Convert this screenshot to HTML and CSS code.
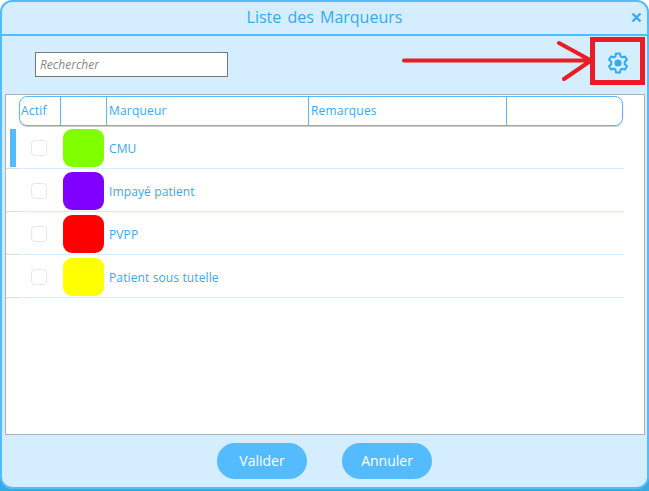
FILE: index.html
```html
<!DOCTYPE html>
<html>
<head>
    <meta name="viewport" content="width=device-width, initial-scale=1">
    <title>Liste des Marqueurs</title>
    <link rel="stylesheet" href="styles.css">
</head>

<body>
    <div class="dialog">
        <div class="title-bar">
            <span class="title">Liste des Marqueurs</span>
            <svg class="close" viewBox="0 0 11 11" width="11" height="11">
                <path d="M1.500 1.500L9.500 9.500M9.500 1.500L1.500 9.500" fill="none" stroke="#36a9f5" stroke-width="2.400"/>
            </svg>
        </div>

        <div class="tool-bar">
            <input type="text" class="search" placeholder="Rechercher">
            <svg class="gear" viewBox="0 0 24 24" width="24" height="24">
                <path d="M10 2.500h4l.6 2.900 1.600.9 2.800-.9 2 3.400-2.200 2v2.400l2.200 2-2 3.400-2.800-.9-1.600.9-.6 2.900h-4l-.6-2.900-1.600-.9-2.800.9-2-3.400 2.200-2v-2.400l-2.200-2 2-3.400 2.800.9 1.600-.9z" fill="none" stroke="#36a9f5" stroke-width="2" stroke-linejoin="round"/>
                <circle cx="12" cy="12" r="3.500" fill="#36a9f5"/>
            </svg>
        </div>

        <div class="panel">
            <div class="grid-head">
                <div class="head-cell">Actif</div>
                <div class="head-cell"></div>
                <div class="head-cell">Marqueur</div>
                <div class="head-cell">Remarques</div>
                <div class="head-cell"></div>
            </div>

            <div class="row selected">
                <div class="row-mark"></div>
                <div class="check-cell"><span class="check"></span></div>
                <div class="swatch green"></div>
                <div class="name">CMU</div>
            </div>
            <div class="row">
                <div class="row-mark"></div>
                <div class="check-cell"><span class="check"></span></div>
                <div class="swatch purple"></div>
                <div class="name">Impayé patient</div>
            </div>
            <div class="row">
                <div class="row-mark"></div>
                <div class="check-cell"><span class="check"></span></div>
                <div class="swatch red"></div>
                <div class="name">PVPP</div>
            </div>
            <div class="row">
                <div class="row-mark"></div>
                <div class="check-cell"><span class="check"></span></div>
                <div class="swatch yellow"></div>
                <div class="name">Patient sous tutelle</div>
            </div>
        </div>

        <div class="buttons">
            <div class="btn">Valider</div>
            <div class="btn">Annuler</div>
        </div>
    </div>

    <!-- red annotation drawn over the screenshot -->
    <svg class="annotation" viewBox="0 0 649 491" width="649" height="491">
        <path d="M404 60.500H590M559 43L591 60.500M564 79L591 60.500" fill="none" stroke="#ed1c24" stroke-width="4" stroke-linecap="round"/>
        <rect x="592.500" y="39.500" width="50" height="43" fill="none" stroke="#ed1c24" stroke-width="5"/>
    </svg>
</body>

</html>
```

FILE: styles.css
```css
* {
    box-sizing: border-box;
}

html,
body {
    margin: 0;
    height: 491px;
    overflow: hidden;
}

body {
    position: relative;
    background: linear-gradient(#ffffff 50%, #36a9e1 50%);
    font-family: "Open Sans", "Noto Sans", sans-serif;
    color: #36a9f5;
}

.dialog {
    display: flex;
    flex-direction: column;
    width: 649px;
    height: 489px;
    background-color: #d4eeff;
    border: 2px solid #55bbff;
    border-radius: 12px;
}

.title-bar {
    display: flex;
    justify-content: center;
    align-items: center;
    position: relative;
    height: 34px;
    flex-shrink: 0;
    padding-bottom: 2px;
    border-bottom: 2px solid #55bbff;
}

.title {
    font-size: 16px;
    word-spacing: 2px;
}

.close {
    position: absolute;
    right: 5px;
    top: 10px;
}

.tool-bar {
    display: flex;
    justify-content: space-between;
    align-items: center;
    height: 58px;
    flex-shrink: 0;
    padding: 0 17px 0 33px;
}

.search {
    width: 193px;
    height: 25px;
    margin-bottom: 2px;
    padding: 0 4px;
    border: 1px solid #777777;
    border-radius: 0;
    background-color: white;
    font-family: "Open Sans", "Noto Sans", sans-serif;
    font-size: 12px;
    font-style: italic;
}

.search::placeholder {
    color: #888888;
    opacity: 1;
}

.gear {
    margin-bottom: 4px;
}

.panel {
    height: 341px;
    flex-shrink: 0;
    margin: 0 2px 0 3px;
    padding: 1px 0 0 13px;
    background-color: white;
    border: 1px solid #aab0b8;
}

.grid-head {
    display: grid;
    grid-template-columns: 41px 46px 202px 198px 116px;
    width: 604px;
    height: 30px;
    border: 1px solid #55bbff;
    border-radius: 8px;
    box-shadow: 0 1px 0 #cccccc;
    font-size: 12px;
    letter-spacing: 0.2px;
}

.head-cell {
    padding-left: 2px;
    line-height: 28px;
    border-right: 1px solid #55bbff;
}

.head-cell:first-child {
    padding-left: 1px;
}

.head-cell:last-child {
    border-right: none;
}

.row {
    display: flex;
    align-items: center;
    position: relative;
    width: 605px;
    height: 43px;
    padding-top: 2px;
    border-bottom: 1px solid #d4eeff;
    font-size: 12px;
    letter-spacing: 0.12px;
}

.row-mark {
    position: absolute;
    left: -13px;
    bottom: -1px;
    width: 13px;
    height: 1px;
    background-color: #dddddd;
}

.selected .row-mark::before {
    content: "";
    position: absolute;
    left: 4px;
    bottom: 2px;
    width: 6px;
    height: 38px;
    background-color: #55bbff;
}

.check-cell {
    display: flex;
    justify-content: center;
    width: 40px;
}

.check {
    width: 16px;
    height: 16px;
    background-color: white;
    border: 1px solid #e4e8ec;
    border-radius: 4px;
}

.swatch {
    width: 41px;
    height: 38px;
    margin-left: 4px;
    border-radius: 9px;
}

.green {
    background-color: #80ff00;
}

.purple {
    background-color: #8000ff;
}

.red {
    background-color: #ff0000;
}

.yellow {
    background-color: #ffff00;
}

.name {
    margin-left: 5px;
}

.buttons {
    display: flex;
    justify-content: center;
    align-items: center;
    gap: 35px;
    flex: 1;
}

.btn {
    width: 90px;
    height: 36px;
    border-radius: 18px;
    background-color: #55bbff;
    color: white;
    font-size: 14px;
    line-height: 36px;
    text-align: center;
}

.annotation {
    position: absolute;
    left: 0;
    top: 0;
}
```
